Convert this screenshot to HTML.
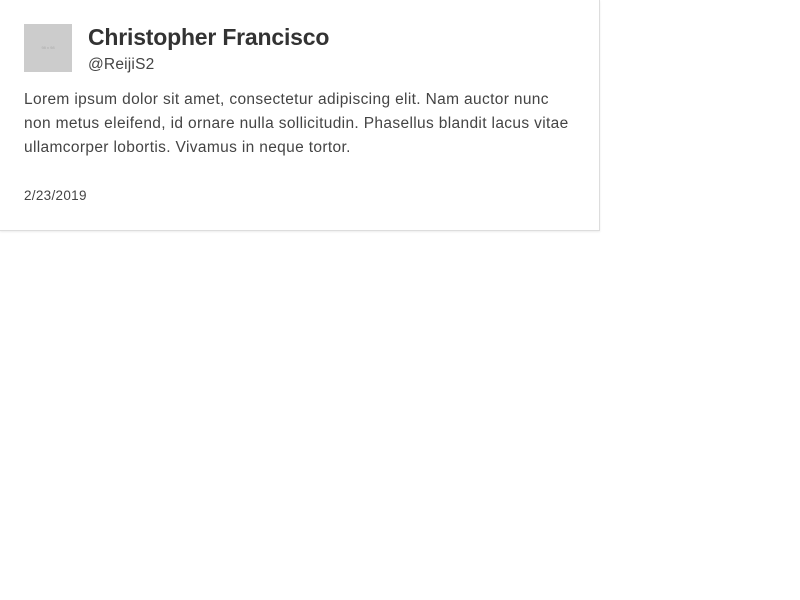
<!DOCTYPE html>
<html><head><style>
body{margin:0;background:#fff;font-family:"Liberation Sans",sans-serif;color:#363636;}
.card{position:absolute;left:0;top:0;width:599px;height:230px;border-right:1px solid #ddd;border-bottom:1px solid #ddd;box-shadow:0 1px 2px rgba(0,0,0,.08);}
.av{position:absolute;left:24px;top:24px;width:48px;height:48px;background:#ccc;color:#aaa;font-size:4px;text-align:center;line-height:48px;}
.name{position:absolute;left:88px;top:24px;font-size:23px;font-weight:bold;color:#333;letter-spacing:-0.2px;}
.handle{position:absolute;left:88px;top:56px;font-size:15.5px;color:#444;letter-spacing:0.2px;}
.body{position:absolute;left:24px;top:88px;width:580px;font-size:15.5px;line-height:24px;color:#444;white-space:nowrap;letter-spacing:0.35px;}
.date{position:absolute;left:24px;top:188px;font-size:13.5px;color:#444;letter-spacing:0.3px;}
</style></head><body>
<div class="card">
<div class="av">98 x 98</div>
<div class="name">Christopher Francisco</div>
<div class="handle">@ReijiS2</div>
<div class="body">Lorem ipsum dolor sit amet, consectetur adipiscing elit. Nam auctor nunc<br>non metus eleifend, id ornare nulla sollicitudin. Phasellus blandit lacus vitae<br>ullamcorper lobortis. Vivamus in neque tortor.</div>
<div class="date">2/23/2019</div>
</div>
</body></html>
